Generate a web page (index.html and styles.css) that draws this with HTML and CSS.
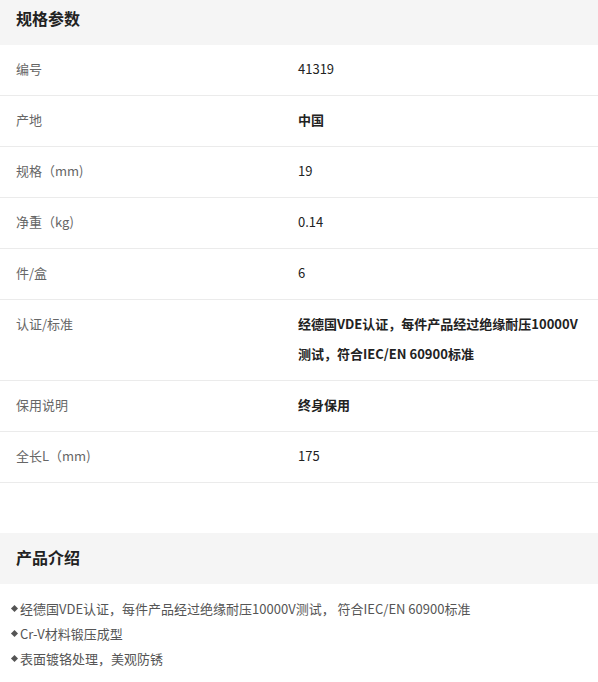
FILE: index.html
```html
<!DOCTYPE html>
<html lang="zh">
<head>
<meta charset="utf-8">
<link rel="stylesheet" href="styles.css">
</head>
<body>
<section class="specs">
  <h2 class="head">规格参数</h2>
  <div class="row"><div class="label">编号</div><div class="value">41319</div></div>
  <div class="row"><div class="label">产地</div><div class="value bold">中国</div></div>
  <div class="row"><div class="label">规格（mm)</div><div class="value">19</div></div>
  <div class="row"><div class="label">净重（kg)</div><div class="value">0.14</div></div>
  <div class="row"><div class="label">件/盒</div><div class="value">6</div></div>
  <div class="row multi"><div class="label">认证/标准</div><div class="value bold">经德国VDE认证，每件产品经过绝缘耐压10000V测试，符合IEC/EN 60900标准</div></div>
  <div class="row"><div class="label">保用说明</div><div class="value bold">终身保用</div></div>
  <div class="row"><div class="label">全长L（mm)</div><div class="value">175</div></div>
</section>
<section class="intro">
  <h2 class="head">产品介绍</h2>
  <ul class="points">
    <li>经德国VDE认证，每件产品经过绝缘耐压10000V测试， 符合IEC/EN 60900标准</li>
    <li>Cr-V材料锻压成型</li>
    <li>表面镀铬处理，美观防锈</li>
  </ul>
</section>
</body>
</html>
```
FILE: styles.css
```css
* { box-sizing: border-box; }
body {
  margin: 0;
  font-family: "Noto Sans CJK SC", "Noto Sans", sans-serif;
  font-size: 13px;
  color: #333;
  background: #fff;
}
.head {
  margin: 0;
  height: 51px;
  line-height: 49px;
  padding: 0 16px;
  background: #f5f5f5;
  font-size: 16px;
  font-weight: 700;
  color: #222;
}
.specs { margin-top: -6px; padding-bottom: 50px; }
.row {
  display: grid;
  grid-template-columns: 282px 1fr;
  padding: 0 16px 3px;
  min-height: 51px;
  align-items: center;
  border-bottom: 1px solid #ebebeb;
}
.row.multi {
  align-items: start;
  padding-top: 9px;
  padding-bottom: 11px;
}
.row.multi .value { line-height: 30px; }
.row.multi .label { line-height: 30px; }
.label { color: #666; }
.value { color: #222; }
.bold { font-weight: 700; }
.points {
  list-style: none;
  margin: 0;
  padding: 12px 0 0 11px;
  color: #555;
}
.points li {
  line-height: 25px;
  position: relative;
  padding-left: 9px;
}
.points li::before {
  content: "";
  position: absolute;
  left: 1px;
  top: 10px;
  width: 5px;
  height: 5px;
  background: #555;
  transform: rotate(45deg);
}
```
